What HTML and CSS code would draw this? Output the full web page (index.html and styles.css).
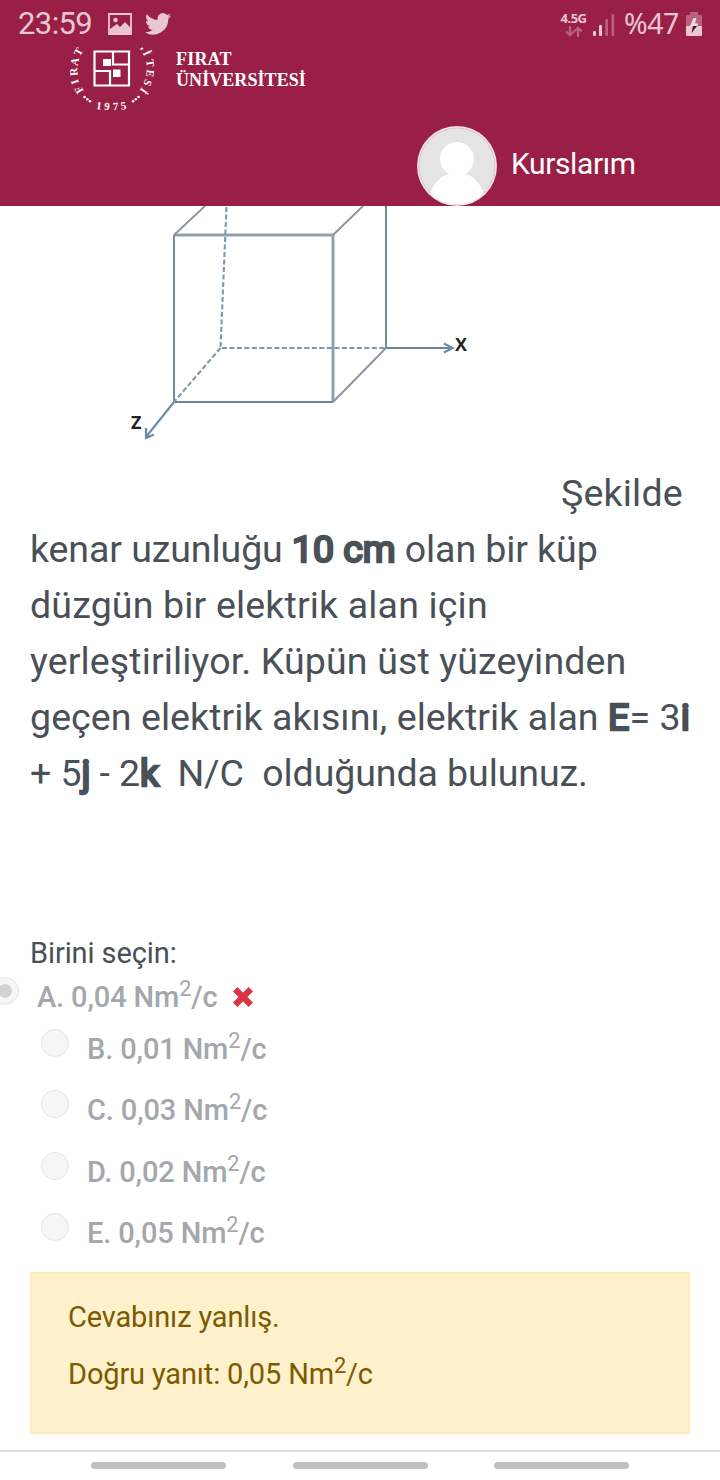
FILE: index.html
```html
<!DOCTYPE html>
<html lang="tr">
<head>
<meta charset="utf-8">
<title>Fırat Üniversitesi</title>
<link rel="stylesheet" href="styles.css">
</head>
<body>
<header class="header">
  <div class="status">
    <span class="time">23:59</span>
    <svg class="photo" width="24" height="22" viewBox="0 0 24 22"><path fill="none" stroke="currentColor" stroke-width="1.8" d="M1 1h22v20H1z"/><circle cx="7.500" cy="7" r="2.300" fill="currentColor"/><path fill="currentColor" d="M2 16l7-5 3 3 5-5 6 6v7H2z"/></svg>
    <svg class="bird" width="26" height="22" viewBox="0 0 24 20"><path fill="currentColor" d="M24 2.4a10 10 0 0 1-2.8.8A5 5 0 0 0 23.3.5a10 10 0 0 1-3.1 1.2 4.9 4.9 0 0 0-8.4 4.5A14 14 0 0 1 1.7 1a4.9 4.9 0 0 0 1.5 6.6 5 5 0 0 1-2.2-.6 4.900 4.900 0 0 0 3.900 4.900 5 5 0 0 1-2.200.1 4.900 4.900 0 0 0 4.600 3.400A10 10 0 0 1 0 17.500 14 14 0 0 0 21.500 5a10 10 0 0 0 2.500-2.600z"/></svg>
    <span class="spacer"></span>
    <div class="net"><span class="gen">4.5G</span><svg width="18" height="11" viewBox="0 0 18 11"><path fill="none" stroke="currentColor" stroke-width="2.2" d="M5 0v9M1.200 5.500L5 9.300l3.800-3.800M13 11V2M9.200 5.500L13 1.700l3.800 3.800"/></svg></div>
    <svg class="signal" width="22" height="23" viewBox="0 0 22 23"><g fill="currentColor"><rect y="18" width="3" height="5" rx="1"/><rect x="6" y="12" width="3" height="11" rx="1"/><g opacity=".4"><rect x="12.300" y="6" width="2.700" height="17" rx="1"/><rect x="18.500" y="1" width="2.700" height="22" rx="1"/></g></g></svg>
    <span class="percent">%47</span>
    <svg class="battery" width="16" height="24" viewBox="0 0 16 24"><path fill="currentColor" opacity=".4" d="M4 0h8v3h3q1 0 1 1v10H0V4q0-1 1-1h3z"/><path fill="currentColor" d="M0 14h16v9q0 1-1 1H1q-1 0-1-1z"/><path fill="#eed8df" d="M7.500 6h3L9 11.500h3.500L11 14H4z"/><path fill="#351522" d="M7 14h4L5.500 21z"/></svg>
  </div>
  <div class="brand">
    <svg class="seal" width="90" height="66" viewBox="68 48 90 66">
      <path class="frame" d="M94.500 51.500h34.500v34H94.500zM113 51.500v13h16M94.500 71h15.500v14.500"/>
      <path fill="#fff" d="M103 59h8v7h-8zM113 69.500h7.500v7.500H113z"/>
      <g class="ring">
        <text transform="translate(78.500 90) rotate(-122)" y="4">F</text>
        <text transform="translate(74.500 82) rotate(-109)" y="4">I</text>
        <text transform="translate(73.500 72) rotate(-95)" y="4">R</text>
        <text transform="translate(74.500 61.500) rotate(-78)" y="4">A</text>
        <text transform="translate(78 51.500) rotate(-60)" y="4">T</text>
        <text transform="translate(147 53) rotate(65)" y="4">İ</text>
        <text transform="translate(150.500 63) rotate(82)" y="4">T</text>
        <text transform="translate(150.500 73.500) rotate(98)" y="4">E</text>
        <text transform="translate(148 83) rotate(113)" y="4">S</text>
        <text transform="translate(144 91) rotate(126)" y="4">İ</text>
        <text transform="translate(99 105.500) rotate(8)" y="4">1</text>
        <text transform="translate(107 106) rotate(4)" y="4">9</text>
        <text transform="translate(115.500 106) rotate(-3)" y="4">7</text>
        <text transform="translate(123.500 105.500) rotate(-8)" y="4">5</text>
      </g>
      <path d="M140.500 49.500l2.500-1.500" stroke="#fff" stroke-width="1.800"/>
      <g fill="#fff"><circle cx="84.500" cy="97" r="1.300"/><circle cx="87.300" cy="99.300" r="1.300"/><circle cx="90" cy="101.200" r="1.300"/><circle cx="133" cy="101.200" r="1.300"/><circle cx="135.800" cy="99.300" r="1.300"/><circle cx="138.500" cy="97" r="1.300"/></g>
    </svg>
    <div class="name"><span class="n1">FIRAT</span><span class="n2">ÜNİVERSİTESİ</span></div>
  </div>
  <div class="user">
    <svg width="80" height="80" viewBox="0 0 80 80"><defs><clipPath id="disc"><circle cx="40" cy="40" r="38.500"/></clipPath></defs><circle cx="40" cy="40" r="40" fill="#f1e3e8"/><circle cx="40" cy="40" r="38" fill="#e4e4e4" stroke="#d5a9b8" stroke-width=".6"/><g fill="#fff" clip-path="url(#disc)"><circle cx="40" cy="33" r="17"/><path d="M32 44h16v4c9 2 15 9 19 20l-7 14H20l-7-14c4-11 10-18 19-20z"/></g></svg>
    <span class="courses">Kurslarım</span>
  </div>
</header>
<main class="main">
  <svg class="cube" width="360" height="244" viewBox="120 206 360 244">
    <g fill="none" stroke="#6d8497" stroke-width="1.900">
      <path d="M174 235V402H333M386 206V348M386 348H452"/>
      <path stroke-width="3" stroke="#8fa1af" d="M174 235H333V402"/>
      <path stroke="#8d939f" d="M174 235L205 206M333 235L363 206M333 402L386 348"/>
      <path stroke="#7f97ab" stroke-width="2.100" stroke-dasharray="5 2.500" d="M226.500 207L220.500 348H386M220.500 348L174 402"/>
      <path stroke="#6a8da8" stroke-width="2.200" d="M174 402L146 437M444 343.500L452.500 348L444 352.500M146 428V438L154 434.500"/>
    </g>
    <text class="axis" x="455" y="351">X</text>
    <text class="axis" x="131" y="429">Z</text>
  </svg>
  <div class="question">
    <div class="first"><span class="q0">Şekilde</span></div>
    <div><span class="q1">kenar uzunluğu <b>10 cm</b> olan bir küp</span></div>
    <div><span class="q2">düzgün bir elektrik alan için</span></div>
    <div><span class="q3">yerleştiriliyor. Küpün üst yüzeyinden</span></div>
    <div><span class="q4">geçen elektrik akısını, elektrik alan <b>E</b>= 3<b>i</b></span></div>
    <div><span class="q5">+ 5<b>j</b> - 2<b>k</b>&nbsp; N/C&nbsp; olduğunda bulunuz.</span></div>
  </div>
  <div class="prompt"><span>Birini seçin:</span></div>
  <div class="options">
    <div class="option chosen"><i class="radio"></i><span class="label">A. 0,04 Nm<sup>2</sup>/c</span><svg class="wrong" width="20" height="20" viewBox="0 0 20 20"><path stroke="#db3445" stroke-width="6.200" d="M2.200 2.200l15.600 15.600M17.800 2.200L2.200 17.800"/></svg></div>
    <div class="option"><i class="radio"></i><span class="label">B. 0,01 Nm<sup>2</sup>/c</span></div>
    <div class="option"><i class="radio"></i><span class="label">C. 0,03 Nm<sup>2</sup>/c</span></div>
    <div class="option"><i class="radio"></i><span class="label">D. 0,02 Nm<sup>2</sup>/c</span></div>
    <div class="option"><i class="radio"></i><span class="label">E. 0,05 Nm<sup>2</sup>/c</span></div>
  </div>
  <div class="feedback">
    <div><span class="f1">Cevabınız yanlış.</span></div>
    <div><span class="f2">Doğru yanıt: 0,05 Nm<sup>2</sup>/c</span></div>
  </div>
</main>
<nav class="nav"><i></i><i></i><i></i></nav>
</body>
</html>
```
FILE: styles.css
```css
* { box-sizing: border-box; }
body { margin: 0; width: 720px; height: 1480px; overflow: hidden; background: #fff; color: #495057; font-family: Roboto, sans-serif; display: flex; flex-direction: column; }
svg { display: block; flex: none; }
.header { height: 206px; background: #9a1f46; color: #fff; flex: none; }
.status { height: 48px; padding: 0 18px 0 18px; display: flex; align-items: center; color: #e8c6d2; }
.time { font-size: 31px; line-height: 46px; width: 90px; letter-spacing: -.6px; }
.bird { margin-left: 13px; }
.spacer { flex: 1; }
.net { width: 27px; display: flex; flex-direction: column; align-items: center; gap: 2px; }
.net svg { opacity: .4; }
.gen { font: bold 13px/12px "Open Sans", sans-serif; letter-spacing: -.5px; }
.signal { margin-left: 6px; }
.percent { margin-left: 9px; font: 28.500px/46px "Noto Sans", sans-serif; letter-spacing: -.5px; width: 55px; padding-bottom: 2px; white-space: nowrap; }
.battery { margin-left: 7px; }
.brand { height: 78px; padding-left: 68px; display: flex; }
.seal { overflow: visible; }
.frame { fill: none; stroke: #fff; stroke-width: 2.2; }
.ring { font: bold 11px "Liberation Serif", serif; fill: #fff; text-anchor: middle; }
.name { margin-left: 18px; display: flex; flex-direction: column; font: bold 18px/21px "Liberation Serif", serif; }
.n1 { padding-top: 1px; letter-spacing: .2px; }
.n2 { letter-spacing: .07px; }
.user { height: 80px; padding-left: 417px; display: flex; gap: 14px; }
.courses { font-size: 30px; line-height: 76px; letter-spacing: -.4px; }
.main { height: 1244px; flex: none; }
.cube { margin-left: 120px; }
.axis { font: bold 18px "Open Sans", sans-serif; fill: #222; }
.question { padding: 15px 0 0 30px; font-size: 37.5px; line-height: 56px; white-space: nowrap; }
.question b { font-weight: 400; -webkit-text-stroke: 2.5px currentColor; }
.first { padding-left: 531px; }
.q0 { letter-spacing: .2px; }
.q1 { letter-spacing: -.08px; }
.q2 { letter-spacing: .17px; }
.q3 { letter-spacing: .14px; }
.q4 { letter-spacing: .08px; }
.q5 { letter-spacing: -.08px; }
.prompt { padding: 132px 0 0 30px; font-size: 29px; line-height: 40px; letter-spacing: -.1px; }
.options { display: flex; flex-direction: column; }
.option { height: 61.3px; padding-left: 41px; display: flex; align-items: flex-start; color: #a4a7ab; font-size: 29px; line-height: 40px; font-weight: 500; letter-spacing: -.13px; }
.chosen { height: 56px; padding-left: 0; margin-left: -9px; }
.chosen .label { padding-top: 4px; }
.radio { width: 28px; height: 28px; margin: 0 18px 0 0; border: 1px solid #e6e6e6; border-radius: 50%; background: #f6f6f6; flex: none; }
.chosen .radio { margin-top: 4px; background: radial-gradient(circle, #d2d2d2 0 6.5px, #f6f6f6 7px); }
.label { white-space: nowrap; }
sup { font-size: 75%; font-weight: 400; line-height: 0; position: relative; vertical-align: baseline; top: -.5em; }
.wrong { margin: 14px 0 0 16px; }
.feedback { width: 660px; height: 162px; margin: -2px 0 0 30px; padding: 23px 0 0 36px; border: 2px solid #ffebb8; background: #fff1cc; color: #7d5a00; font-size: 29px; line-height: 40px; letter-spacing: -.15px; display: flex; flex-direction: column; gap: 17px; }
.nav { height: 30px; border-top: 2px solid #e0e0e0; padding: 10px 91px 0; display: flex; justify-content: space-between; }
.nav i { width: 135px; height: 7px; border-radius: 4px; background: #c0c0c0; }
```
